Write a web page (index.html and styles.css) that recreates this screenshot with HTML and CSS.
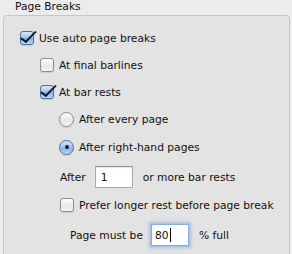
FILE: index.html
```html
<!DOCTYPE html>
<html lang="en">
<head>
    <meta charset="UTF-8">
    <title>Page Breaks</title>
    <link rel="stylesheet" href="styles.css">
</head>
<body>
    <div class="group-title">Page Breaks</div>
    <div class="group">
        <div class="row lvl0">
            <span class="check checked"></span>
            <span class="label">Use auto page breaks</span>
        </div>
        <div class="row lvl1">
            <span class="check"></span>
            <span class="label">At final barlines</span>
        </div>
        <div class="row lvl1">
            <span class="check checked"></span>
            <span class="label">At bar rests</span>
        </div>
        <div class="row lvl2">
            <span class="radio"></span>
            <span class="label">After every page</span>
        </div>
        <div class="row lvl2 space-md">
            <span class="radio selected"></span>
            <span class="label">After right-hand pages</span>
        </div>
        <div class="row lvl3 space-lg">
            <span class="text">After</span>
            <span class="field">1</span>
            <span class="text">or more bar rests</span>
        </div>
        <div class="row lvl3 space-md">
            <span class="check"></span>
            <span class="label">Prefer longer rest before page break</span>
        </div>
        <div class="row lvl4 space-lg">
            <span class="text">Page must be</span>
            <span class="field focused">80<span class="caret"></span></span>
            <span class="text">% full</span>
        </div>
    </div>
</body>
</html>
```
FILE: styles.css
```css
* {
    box-sizing: border-box;
}

body {
    margin: 0;
    background-color: #ececec;
    font-family: 'DejaVu Sans', 'Noto Sans', sans-serif;
    font-size: 10.7px;
    color: #111;
    overflow: hidden;
}

.group-title {
    height: 15px;
    padding-left: 15px;
    line-height: 14px;
}

.group {
    margin: 0 2px 0 3px;
    height: 239px;
    background-color: #e3e3e3;
    border: 1px solid #c6c6c6;
    border-bottom: none;
    border-radius: 4px 4px 0 0;
    padding-top: 11px;
    display: flex;
    flex-direction: column;
    gap: 5px;
}

.row {
    display: flex;
    align-items: center;
    height: 22px;
    flex-shrink: 0;
}

.space-md {
    margin-top: 1px;
}

.space-lg {
    margin-top: 3px;
}

.lvl0 { padding-left: 16px; }
.lvl1 { padding-left: 36px; }
.lvl2 { padding-left: 55px; }
.lvl3 { padding-left: 56px; }
.lvl4 { padding-left: 66px; }

.label {
    margin-left: 5px;
}

/* checkbox */
.check {
    position: relative;
    width: 14px;
    height: 14px;
    border: 1px solid #8d8d8d;
    border-radius: 3px;
    background: linear-gradient(#ffffff, #e8e8e8 60%, #f6f6f6);
    box-shadow: 0 1px 1px rgba(0,0,0,0.12);
}

.check.checked {
    border-color: #4f6f9c;
    background: linear-gradient(#d9e7f7, #9dc2ec 50%, #7fb0ea 51%, #bcd8f7);
}

.check.checked::after {
    content: "";
    position: absolute;
    left: 4px;
    top: -4px;
    width: 5px;
    height: 13px;
    border-right: 2.5px solid #111a33;
    border-bottom: 2.5px solid #111a33;
    transform: rotate(35deg) skewX(-10deg);
}

/* radio */
.radio {
    position: relative;
    width: 15px;
    height: 15px;
    border: 1px solid #8d8d8d;
    border-radius: 50%;
    background: linear-gradient(#ffffff, #e6e6e6 60%, #f6f6f6);
    box-shadow: 0 1px 1px rgba(0,0,0,0.12);
}

.radio.selected {
    border-color: #4f6f9c;
    background: linear-gradient(#d9e7f7, #9dc2ec 50%, #7fb0ea 51%, #bcd8f7);
}

.radio.selected::after {
    content: "";
    position: absolute;
    left: 4.5px;
    top: 4.5px;
    width: 4px;
    height: 4px;
    border-radius: 50%;
    background-color: #111a33;
}

/* text fields */
.field {
    width: 38px;
    height: 22px;
    margin: 0 10px 0 9px;
    padding-left: 5px;
    line-height: 21px;
    background-color: #fff;
    border: 1px solid #a9a9a9;
    border-top-color: #8e8e8e;
    box-shadow: inset 0 1px 1px rgba(0,0,0,0.1);
}

.field.focused {
    margin-left: 8px;
    padding-left: 3px;
    border-color: #8aaedc;
    box-shadow: 0 0 0 1px #a5c4ec, 0 0 3px 2px rgba(120,160,220,0.5);
}

.caret {
    display: inline-block;
    width: 1px;
    height: 14px;
    margin-left: 1px;
    background-color: #000;
    vertical-align: -3px;
}
```
